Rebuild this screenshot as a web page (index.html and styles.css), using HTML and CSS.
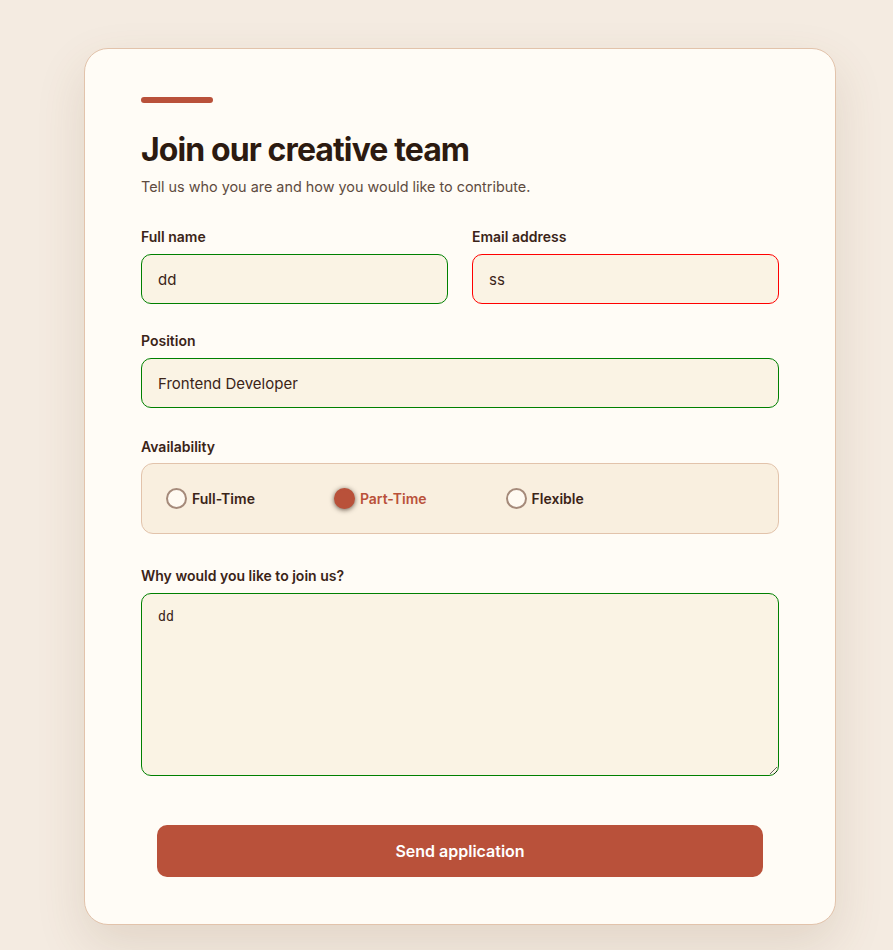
FILE: index.html
```html
<!DOCTYPE html>
<html lang="en">
<head>
    <meta charset="UTF-8">
    <meta name="viewport" content="width=device-width, initial-scale=1.0">
    <title>Join our creative team</title>
    <link rel="stylesheet" href="styles.css">
</head>
<body>
    <div class="card">
        <div class="accent"></div>
        <h1>Join our creative team</h1>
        <p class="subtitle">Tell us who you are and how you would like to contribute.</p>

        <form id="applyForm">
            <div class="row">
                <div class="field">
                    <label for="name">Full name</label>
                    <input type="text" id="name" class="valid" value="dd">
                </div>
                <div class="field">
                    <label for="email">Email address</label>
                    <input type="text" id="email" class="invalid" value="ss">
                </div>
            </div>
            <div class="field position">
                <label for="position">Position</label>
                <input type="text" id="position" class="valid" value="Frontend Developer">
            </div>
            <div class="field availability">
                <label>Availability</label>
                <div class="radio-group">
                    <label class="radio"><input type="radio" name="availability" value="full"><span>Full-Time</span></label>
                    <label class="radio"><input type="radio" name="availability" value="part" checked><span>Part-Time</span></label>
                    <label class="radio"><input type="radio" name="availability" value="flex"><span>Flexible</span></label>
                </div>
            </div>
            <div class="field">
                <label for="why">Why would you like to join us?</label>
                <textarea id="why" class="valid">dd</textarea>
            </div>
            <button type="submit">Send application</button>
        </form>
    </div>
</body>
</html>
```

FILE: styles.css
```css
body {
    font-family: Inter, "Noto Sans", sans-serif;
    margin: 0;
    padding: 48px 0 40px 84px;
    background-color: #f4ebe1;
    color: #3b2418;
}
.card {
    width: 752px;
    box-sizing: border-box;
    background-color: #fffcf6;
    border: 1px solid #e2c3ab;
    border-radius: 24px;
    box-shadow: 0 20px 50px rgba(110, 75, 45, 0.14);
    padding: 48px 56px 47px 56px;
}
.accent {
    width: 72px;
    height: 6px;
    border-radius: 3px;
    background-color: #b9513a;
}
h1 {
    margin: 27px 0 0;
    font-size: 32px;
    line-height: 40px;
    font-weight: 700;
    letter-spacing: -0.028em;
    color: #2c1a10;
}
.subtitle {
    margin: 6px 0 0;
    font-size: 14.4px;
    line-height: 22px;
    color: #5e4b40;
}
#applyForm {
    margin-top: 29px;
}
.row {
    display: grid;
    grid-template-columns: 1fr 1fr;
    gap: 24px;
}
.field {
    margin-bottom: 27px;
}
.field.position {
    margin-bottom: 29px;
}
.field.availability {
    margin-bottom: 32px;
}
.field > label {
    display: block;
    font-size: 14px;
    line-height: 20px;
    font-weight: 600;
    color: #3b2418;
    margin-bottom: 7px;
}
.availability > label {
    margin-bottom: 6px;
}
.field input[type="text"], .field textarea {
    display: block;
    width: 100%;
    box-sizing: border-box;
    height: 50px;
    padding: 0 16px;
    font-family: Inter, "Noto Sans", sans-serif;
    font-size: 15px;
    color: #3b2418;
    background-color: #faf3e4;
    border: 1px solid #e2c3ab;
    border-radius: 10px;
    outline: none;
}
.field input.valid, .field textarea.valid {
    border-color: #008000;
}
.field input.invalid {
    border-color: #ff0000;
}
.field textarea {
    height: 183px;
    padding: 15px 16px;
    font-family: "DejaVu Sans Mono", monospace;
    font-size: 13.33px;
    resize: vertical;
}
.radio-group {
    display: flex;
    align-items: center;
    gap: 79px;
    height: 71px;
    box-sizing: border-box;
    padding: 0 24px;
    background-color: #f9efdf;
    border: 1px solid #e2c3ab;
    border-radius: 12px;
}
.radio {
    display: flex;
    align-items: center;
    gap: 5px;
    font-size: 14px;
    font-weight: 600;
    color: #3b2418;
    cursor: pointer;
}
.radio input {
    appearance: none;
    margin: 0;
    width: 21px;
    height: 21px;
    border: 2px solid #a58a7a;
    border-radius: 50%;
    background-color: #fffaf2;
    cursor: pointer;
}
.radio input:checked {
    background-color: #b9513a;
    border-color: #b9513a;
    box-shadow: 0 1px 5px rgba(40, 20, 10, 0.7);
}
.radio input:checked + span {
    color: #b9513a;
}
button {
    display: block;
    width: calc(100% - 32px);
    margin: 49px 16px 0;
    height: 52px;
    border: none;
    border-radius: 10px;
    background-color: #b9513a;
    color: #fff;
    font-family: Inter, "Noto Sans", sans-serif;
    font-size: 16px;
    font-weight: 600;
    cursor: pointer;
}
```
